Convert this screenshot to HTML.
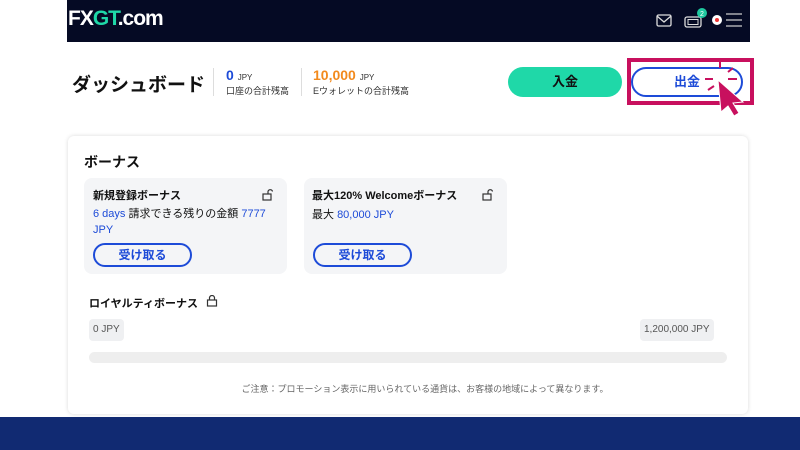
<!DOCTYPE html>
<html><head><meta charset="utf-8"><style>
*{margin:0;padding:0;box-sizing:border-box}
body{width:800px;height:450px;position:relative;background:#fff;font-family:"Liberation Sans","Noto Sans CJK JP",sans-serif;overflow:hidden;color:#111}
.a{position:absolute}
.nav{left:67px;top:0;width:683px;height:42px;background:#050a24}
.logo{left:68px;top:7px;font-size:21px;font-weight:bold;color:#fff;letter-spacing:-1px}
.logo span{color:#1fd8a8}
.card{left:68px;top:136px;width:680px;height:278px;background:#fff;border-radius:6px;box-shadow:0 0 4px rgba(0,0,0,.15)}
.bc{background:#f4f5f7;border-radius:8px;width:203px;height:96px}
.btn{border:2px solid #1d4bd8;border-radius:14px;width:99px;height:24px;font-size:12px;font-weight:bold;color:#1d4bd8;text-align:center;line-height:20px}
.blue{color:#1d4bd8}
.pill{background:#eff0f2;border-radius:4px;font-size:10px;color:#555;height:22px;line-height:22px;padding:0 4px}
</style></head><body>
<div class="a nav"></div>
<div class="a logo">FX<span>GT</span>.com</div>
<svg class="a" style="left:655px;top:8px" width="90" height="24" viewBox="0 0 90 24">
<rect x="2" y="7" width="14" height="11" rx="1.5" fill="none" stroke="#ddd" stroke-width="1.3"/><path d="M2 8l7 6 7-6" fill="none" stroke="#ddd" stroke-width="1.3"/>
<rect x="30" y="9" width="16" height="10" rx="2" fill="none" stroke="#ddd" stroke-width="1.3"/><rect x="33" y="11.5" width="10" height="5" fill="none" stroke="#ddd" stroke-width="1"/>
<circle cx="47" cy="5" r="5" fill="#1fc9a0"/><text x="45" y="8" font-size="7" fill="#fff">2</text>
<circle cx="62" cy="12" r="5" fill="#fff"/><circle cx="62" cy="12" r="2" fill="#e33"/>
<path d="M71 6h16M71 12h16M71 18h16" stroke="#ccc" stroke-width="1.2"/>
</svg>
<div class="a" style="left:72px;top:70px;font-size:19px;font-weight:bold">ダッシュボード</div>
<div class="a" style="left:213px;top:68px;width:1px;height:28px;background:#ddd"></div>
<div class="a" style="left:301px;top:68px;width:1px;height:28px;background:#ddd"></div>
<div class="a" style="left:226px;top:67px;font-size:14px;font-weight:bold;color:#1d4bd8">0 <span style="font-size:8px;color:#333;font-weight:normal">JPY</span></div>
<div class="a" style="left:226px;top:84px;font-size:9px;color:#333">口座の合計残高</div>
<div class="a" style="left:313px;top:67px;font-size:14px;font-weight:bold;color:#f28a1d">10,000 <span style="font-size:8px;color:#333;font-weight:normal">JPY</span></div>
<div class="a" style="left:313px;top:84px;font-size:9px;color:#333">Eウォレットの合計残高</div>
<div class="a" style="left:508px;top:67px;width:114px;height:30px;border-radius:15px;background:#1fd8a8;text-align:center;line-height:30px;font-size:13px;font-weight:bold">入金</div>
<div class="a" style="left:627px;top:58px;width:127px;height:47px;border:4px solid #c8105e"></div>
<div class="a" style="left:631px;top:67px;width:112px;height:30px;border-radius:15px;border:2px solid #1d4bd8;text-align:center;line-height:26px;font-size:13px;font-weight:bold;color:#1d4bd8">出金</div>
<svg class="a" style="left:700px;top:58px" width="60" height="60" viewBox="0 0 60 60">
<path d="M20 4v6M5 21h8M28 21h9M28 14l5-4M8 32l6-4" stroke="#c8105e" stroke-width="2"/>
<path d="M18 22l25 22-10 1 6 10-5 3-6-10-7 6z" fill="#c8105e" stroke="#fff" stroke-width="1"/>
</svg>
<div class="a card"></div>
<div class="a" style="left:84px;top:152px;font-size:14px;font-weight:bold">ボーナス</div>
<div class="a bc" style="left:84px;top:178px"></div>
<div class="a bc" style="left:304px;top:178px"></div>
<div class="a" style="left:93px;top:187px;font-size:11px;font-weight:bold">新規登録ボーナス</div>
<div class="a" style="left:93px;top:206px;font-size:11px;line-height:16px;width:190px"><span class="blue">6 days</span> 請求できる残りの金額 <span class="blue">7777 JPY</span></div>
<div class="a" style="left:312px;top:187px;font-size:11px;font-weight:bold">最大120% Welcomeボーナス</div>
<div class="a" style="left:312px;top:206px;font-size:11px">最大 <span class="blue">80,000 JPY</span></div>
<div class="a btn" style="left:93px;top:243px">受け取る</div>
<div class="a btn" style="left:313px;top:243px">受け取る</div>
<svg class="a" style="left:262px;top:189px" width="12" height="12"><rect x="1" y="5" width="8" height="6" fill="none" stroke="#333" stroke-width="1.2"/><path d="M6 5V2.5a2.3 2.3 0 0 1 4.5 0" fill="none" stroke="#333" stroke-width="1.2"/></svg>
<svg class="a" style="left:482px;top:189px" width="12" height="12"><rect x="1" y="5" width="8" height="6" fill="none" stroke="#333" stroke-width="1.2"/><path d="M6 5V2.5a2.3 2.3 0 0 1 4.5 0" fill="none" stroke="#333" stroke-width="1.2"/></svg>
<div class="a" style="left:89px;top:295px;font-size:11px;font-weight:bold">ロイヤルティボーナス</div>
<svg class="a" style="left:206px;top:295px" width="12" height="12"><rect x="1.5" y="5" width="9" height="6" fill="none" stroke="#333" stroke-width="1.2"/><path d="M3.5 5V3a2.5 2.5 0 0 1 5 0v2" fill="none" stroke="#333" stroke-width="1.2"/></svg>
<div class="a pill" style="left:89px;top:319px">0 JPY</div>
<div class="a pill" style="left:640px;top:319px">1,200,000 JPY</div>
<div class="a" style="left:89px;top:352px;width:638px;height:11px;background:#eee;border-radius:6px"></div>
<div class="a" style="left:85px;top:382px;width:680px;text-align:center;font-size:9px;color:#666">ご注意：プロモーション表示に用いられている通貨は、お客様の地域によって異なります。</div>
<div class="a" style="left:0;top:417px;width:800px;height:33px;background:#112a72"></div>
</body></html>
